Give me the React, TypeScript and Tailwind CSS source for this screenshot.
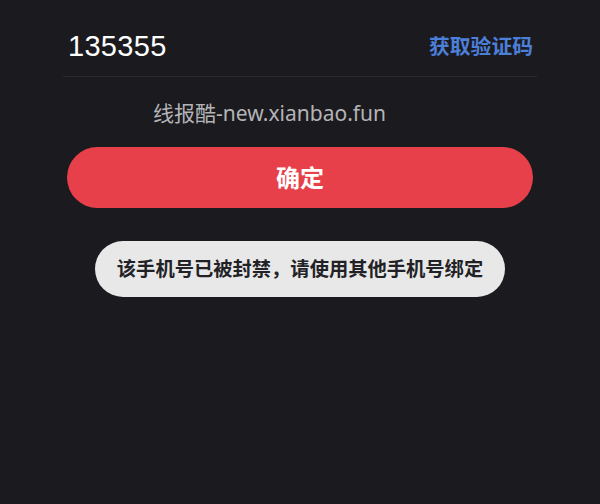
export default function App() {
  return (
    <div
      className="h-[504px] w-[600px] bg-[#1b1a1f] pt-[29px]"
      style={{ fontFamily: '"Noto Sans", "Noto Sans CJK SC", sans-serif' }}
    >
      <div className="mx-[63px]">
        <div className="flex items-center justify-between pl-[5px] pr-[4px] pb-[13px] border-b border-[#2a292f]">
          <span
            className="text-[29px] leading-[34px] tracking-[0.3px] text-white"
            style={{ fontFamily: '"Liberation Sans", Arial, sans-serif' }}
          >
            135355
          </span>
          <span className="text-[20.8px] leading-[34px] font-bold text-[#4c7fd8]">获取验证码</span>
        </div>
      </div>

      <div className="ml-[153px] mt-[22px] text-[21px] leading-[28px] text-[#b4b4b6]">
        线报酷-new.xianbao.fun
      </div>

      <div className="mx-[67px] mt-[20px]">
        <button className="flex h-[61px] w-full items-center justify-center rounded-full bg-[#e8404a] text-[24px] font-bold text-white">
          确定
        </button>
      </div>

      <div className="mt-[33px] flex justify-center">
        <div className="flex h-[56px] w-[410px] items-center justify-center rounded-full bg-[#e8e8e8] text-[19.3px] font-bold text-[#222226]">
          该手机号已被封禁，请使用其他手机号绑定
        </div>
      </div>
    </div>
  );
}
